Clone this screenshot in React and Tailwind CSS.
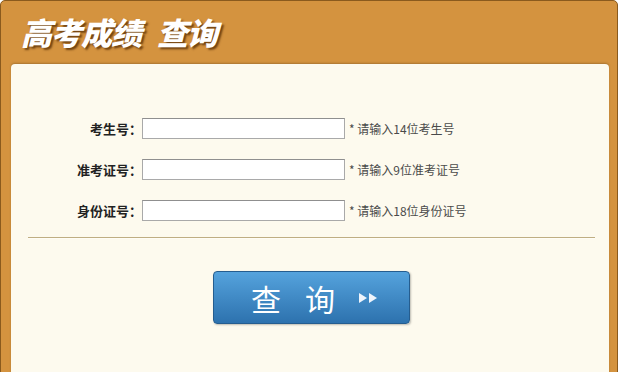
export default function App() {
  const rows = [
    { label: "考生号：", hint: "* 请输入14位考生号" },
    { label: "准考证号：", hint: "* 请输入9位准考证号" },
    { label: "身份证号：", hint: "* 请输入18位身份证号" },
  ];
  return (
    <div
      className="w-[619px] h-[372px] overflow-hidden bg-white"
      style={{ fontFamily: '"Noto Sans CJK SC", "Liberation Sans", sans-serif' }}
    >
      <div className="w-[618px] h-[380px] flex flex-col bg-[#d4933f] border border-[#8a5a1d] rounded-t-[5px] pl-[10px] pr-[8px]">
        <div className="h-[63px] shrink-0 flex items-center pl-[10px] pb-[2px]">
          <div
            className="text-white font-black italic text-[31px] leading-none tracking-[-1px]"
            style={{ textShadow: "2px 2px 2px rgba(80,40,0,0.75)" }}
          >
            <span>高考成绩</span>
            <span className="ml-[16px]">查询</span>
          </div>
        </div>
        <div className="flex-1 bg-[#fdfaee] rounded-t-[4px] shadow-[0_-1px_2px_rgba(90,60,20,0.35)] flex flex-col">
          <div className="flex flex-col gap-[20px] pt-[54px]">
            {rows.map((r) => (
              <div key={r.label} className="flex items-center h-[21px]">
                <div className="w-[131px] text-right font-bold text-[13px] text-[#222] leading-none">
                  {r.label}
                </div>
                <div className="w-[203px] h-[21px] bg-white border border-[#a9a9a9] border-t-[#8f8f8f]" />
                <div className="ml-[4px] text-[12px] text-[#4a4a4a] leading-none">{r.hint}</div>
              </div>
            ))}
          </div>
          <div className="mt-[16px] ml-[17px] w-[567px] h-[2px] border-t border-[#bfae83] border-b border-b-[#fffdf6]" />
          <div className="flex pt-[32px] pl-[202px]">
            <div className="w-[197px] h-[53px] rounded-[4px] border border-[#255d8f] bg-gradient-to-b from-[#55a3dd] to-[#2d72ae] shadow-[1px_1px_2px_rgba(0,0,0,0.25)] flex items-center pl-[37px] text-white text-[30px] leading-none">
              <span>查</span>
              <span className="ml-[24px]">询</span>
              <svg className="ml-[23px]" width="20" height="14" viewBox="0 0 20 14">
                <polygon points="1,2 9,7 1,12" fill="#eef4fb" />
                <polygon points="11,2 19,7 11,12" fill="#eef4fb" />
              </svg>
            </div>
          </div>
        </div>
      </div>
    </div>
  );
}
